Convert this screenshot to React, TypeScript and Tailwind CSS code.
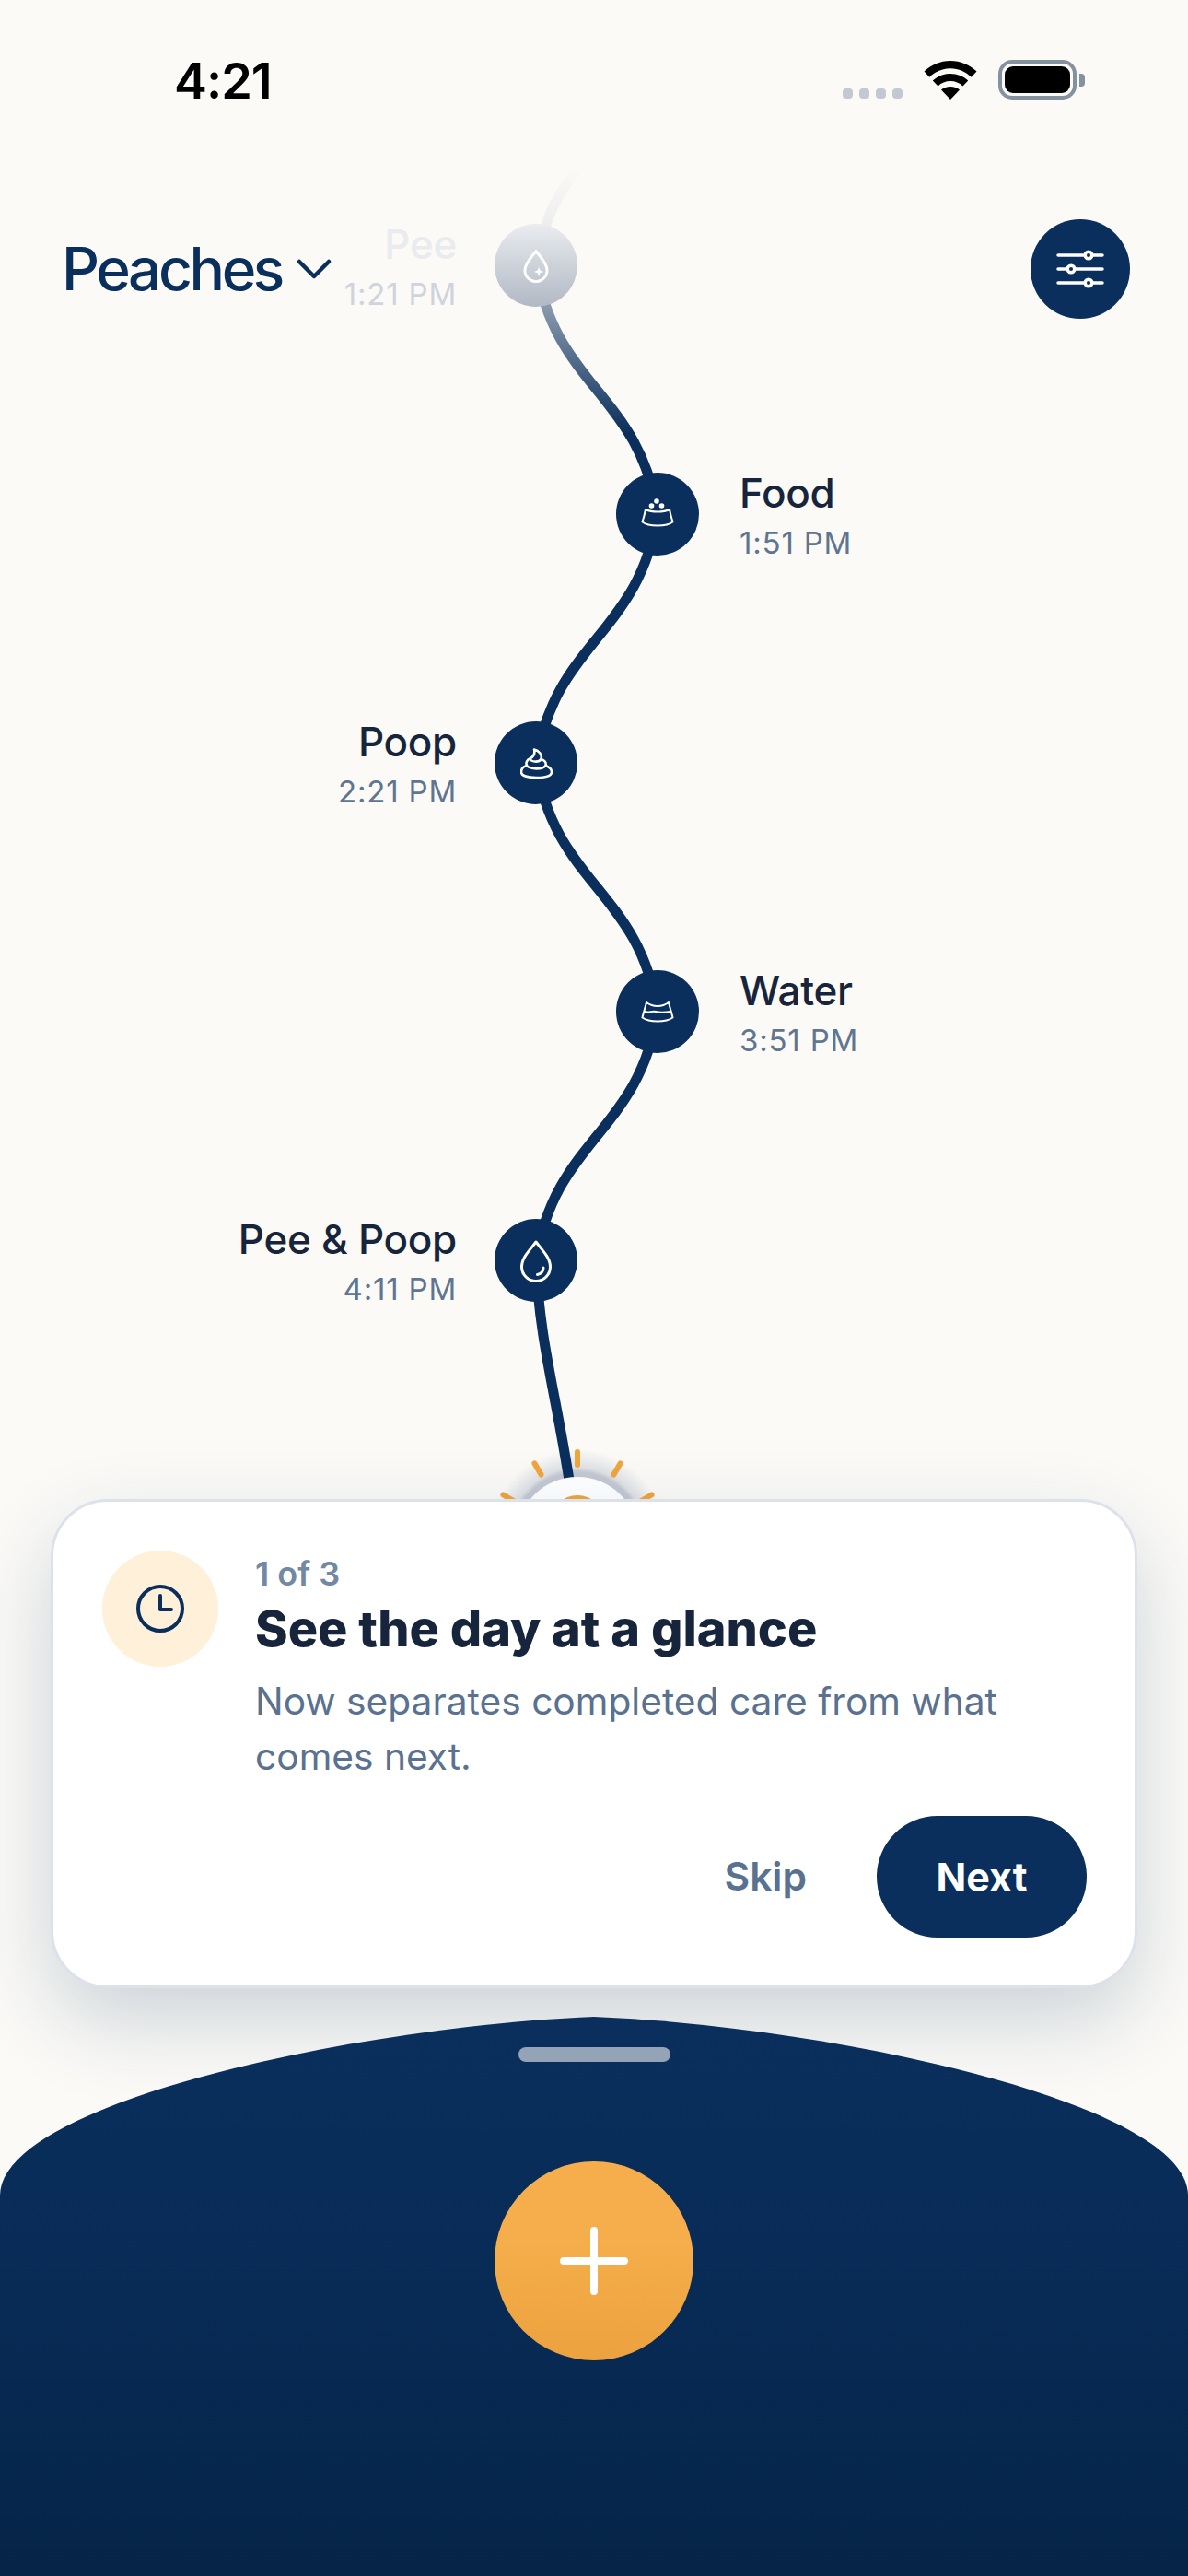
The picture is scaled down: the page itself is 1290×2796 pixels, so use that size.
import React from 'react';

const navy = '#0a2f5c';

function DropIcon({ sparkle = false }: { sparkle?: boolean }) {
  return (
    <svg width={sparkle ? 28 : 36} height={sparkle ? 37 : 47} viewBox="0 0 36 47" fill="none" stroke="#fff" strokeWidth={sparkle ? 3.8 : 3} strokeLinecap="round" strokeLinejoin="round">
      <path d="M18 3C12 11 2.500 20 2.500 30a15.500 15.500 0 0 0 31 0C33.500 20 24 11 18 3Z" />
      {sparkle ? (
        <path d="M22 25l1.800 5 5 1.800-5 1.800-1.800 5-1.800-5-5-1.800 5-1.800Z" fill="#fff" stroke="none" />
      ) : (
        <path d="M26 31c0 4-2 6.500-6.500 7.500" />
      )}
    </svg>
  );
}

function FoodBowlIcon() {
  return (
    <svg className="mb-[3px]" width="36" height="31" viewBox="0 0 36 31" fill="none" stroke="#fff" strokeWidth="2" strokeLinecap="round" strokeLinejoin="round">
      <path d="M5 12C4 17 3 21 1.500 25.500c3 2.500 10 4 16.500 4s13.500-1.500 16.500-4C33 21 32 17 31 12c-3 1.500-8 2.500-13 2.500S8 13.500 5 12Z" />
      <circle cx="11.500" cy="8" r="2.800" fill="#fff" stroke="none" />
      <circle cx="17" cy="3" r="2.800" fill="#fff" stroke="none" />
      <circle cx="22.500" cy="8" r="2.800" fill="#fff" stroke="none" />
    </svg>
  );
}

function WaterBowlIcon() {
  return (
    <svg width="36" height="24" viewBox="0 0 36 24" fill="none" stroke="#fff" strokeWidth="2" strokeLinecap="round" strokeLinejoin="round">
      <path d="M6 2C4.500 8 2.500 14 1.500 18.500 5 21 11 22.500 18 22.500S31 21 34.500 18.500C33.500 14 31.500 8 30 2 26 5 22 6 18 6S10 5 6 2Z" />
      <path d="M4 12c4 1.500 8-1 12 0s10 1 16 0" />
    </svg>
  );
}

function PoopIcon() {
  return (
    <svg width="35" height="33" viewBox="0 0 35 33" fill="none" stroke="#fff" strokeWidth="2.600" strokeLinecap="round" strokeLinejoin="round">
      <path d="M15 1.500C20 2.500 24 7 22.500 12 26 13 28.500 15.500 27.500 19 31.500 20.500 34 23 34 26c0 4-7 6-16.500 6S1 30 1 26c0-3 2-6 6-7-1.500-3.500.5-6.500 3.500-7.500C13 10 16.500 7 15 1.500Z" />
      <path d="M10.500 11.500c1 3.500 9.500 4.500 12 .5" />
      <path d="M7 19c4 4.500 17 4.500 20.500 0" />
    </svg>
  );
}

function SlidersIcon() {
  return (
    <svg width="52" height="44" viewBox="0 0 52 44" fill="none">
      {[7, 22, 37].map((y) => (
        <line key={y} x1="2" x2="50" y1={y} y2={y} stroke="#fff" strokeWidth="3.500" strokeLinecap="round" />
      ))}
      <circle cx="35" cy="7" r="3.800" fill={navy} stroke="#fff" strokeWidth="3.500" />
      <circle cx="16" cy="22" r="3.800" fill={navy} stroke="#fff" strokeWidth="3.500" />
      <circle cx="35" cy="37" r="3.800" fill={navy} stroke="#fff" strokeWidth="3.500" />
    </svg>
  );
}

function StatusIcons() {
  return (
    <div className="flex items-end">
      <div className="flex gap-[7px] mb-[1px]">
        <span className="w-[11px] h-[11px] rounded-[4px] bg-[#c3c8d2]" />
        <span className="w-[11px] h-[11px] rounded-[4px] bg-[#c3c8d2]" />
        <span className="w-[11px] h-[11px] rounded-[4px] bg-[#c3c8d2]" />
        <span className="w-[11px] h-[11px] rounded-[4px] bg-[#c3c8d2]" />
      </div>
      <svg className="ml-[23px]" width="58" height="42" viewBox="0 0 58 42" fill="#000">
        <path d="M29 42 19 31.500c2.700-2.300 6-3.500 10-3.500s7.300 1.200 10 3.500Z" />
        <path d="M15.500 27.500 9.800 21.500C15 16.800 21.500 14 29 14s14 2.800 19.200 7.500l-5.700 6C38.800 24 34.300 22.100 29 22.100S19.200 24 15.500 27.500Z" />
        <path d="M6.300 17.700.5 11.500C8 4.500 18 0 29 0s21 4.500 28.500 11.500l-5.800 6.200C45.700 12 37.800 8.200 29 8.200S12.300 12 6.300 17.700Z" />
      </svg>
      <div className="ml-[23px] flex items-center">
        <div className="w-[85px] h-[43px] rounded-[15px] border-[4px] border-[#84929f] p-[3px]">
          <div className="w-full h-full rounded-[9px] bg-black" />
        </div>
        <div className="ml-[3px] w-[6px] h-[14px] rounded-r-[4px] bg-[#84929f]" />
      </div>
    </div>
  );
}

const nodes = [
  { title: 'Pee', time: '1:21 PM', pos: 'left-[537px] top-[243px]', side: 'left', faded: true, icon: <DropIcon sparkle /> },
  { title: 'Food', time: '1:51 PM', pos: 'left-[669px] top-[513px]', side: 'right', faded: false, icon: <FoodBowlIcon /> },
  { title: 'Poop', time: '2:21 PM', pos: 'left-[537px] top-[783px]', side: 'left', faded: false, icon: <PoopIcon /> },
  { title: 'Water', time: '3:51 PM', pos: 'left-[669px] top-[1053px]', side: 'right', faded: false, icon: <WaterBowlIcon /> },
  { title: 'Pee & Poop', time: '4:11 PM', pos: 'left-[537px] top-[1323px]', side: 'left', faded: false, icon: <DropIcon /> },
];

function TimelineNode({ title, time, pos, side, faded, icon }: (typeof nodes)[number]) {
  return (
    <div className={`absolute ${pos} w-[90px] h-[90px]`}>
      <div className={`w-full h-full rounded-full flex items-center justify-center ${faded ? 'bg-gradient-to-b from-[#eaecef] to-[#b1b9c5]' : 'bg-[#0a2f5c]'}`}>
        {icon}
      </div>
      <div className={`absolute top-[-8px] whitespace-nowrap ${side === 'left' ? 'right-[131px] text-right' : 'left-[134px] text-left'}`}>
        <div className={`text-[44px] leading-[60px] font-medium tracking-[-0.3px] ${faded ? 'text-[#e9ebee]' : 'text-[#16253b]'}`}>{title}</div>
        <div className={`text-[33px] leading-[38px] mt-[5px] tracking-[0.8px] ${faded ? 'text-[#cfd4dc]' : 'text-[#5f7590]'}`}>{time}</div>
      </div>
    </div>
  );
}

function Timeline() {
  const rays = [-60, -30, 0, 30, 60];
  return (
    <div className="absolute inset-x-0 top-0 h-[1700px]">
      <svg className="absolute left-0 top-0" width="1290" height="1700" viewBox="0 0 1290 1700" fill="none">
        <defs>
          <linearGradient id="fade" gradientUnits="userSpaceOnUse" x1="0" x2="0" y1="180" y2="470">
            <stop offset="0" stopColor={navy} stopOpacity="0" />
            <stop offset="0.22" stopColor={navy} stopOpacity="0.06" />
            <stop offset="0.53" stopColor={navy} stopOpacity="0.48" />
            <stop offset="1" stopColor={navy} stopOpacity="1" />
          </linearGradient>
          <radialGradient id="glow" gradientUnits="userSpaceOnUse" cx="627" cy="1669" r="96">
            <stop offset="0.74" stopColor="#c3c8d2" stopOpacity="1" />
            <stop offset="0.79" stopColor="#c3c8d2" stopOpacity="0.5" />
            <stop offset="1" stopColor="#c3c8d2" stopOpacity="0" />
          </radialGradient>
        </defs>
        <circle cx="627" cy="1669" r="96" fill="url(#glow)" />
        <path d="M640 170C605 205 590 240 582 288C602 420 694 426 714 558" stroke="url(#fade)" strokeWidth="11" />
        <path d="M714 558C694 690 602 696 582 828C602 960 694 966 714 1098C694 1230 602 1236 582 1368C586 1470 610 1530 627 1669" stroke={navy} strokeWidth="11" />
        {rays.map((a) => (
          <line key={a} x1="627" x2="627" y1="1576" y2="1590" stroke="#f0a53c" strokeWidth="6" strokeLinecap="round" transform={`rotate(${a} 627 1669)`} />
        ))}
        <circle cx="627" cy="1669" r="66" fill="#fff" />
        <circle cx="627" cy="1653" r="30" fill="#f0a53c" />
      </svg>
      {nodes.map((n) => (
        <TimelineNode key={n.title} {...n} />
      ))}
    </div>
  );
}

function TourCard() {
  return (
    <div className="absolute left-[55px] top-[1627px] w-[1180px] h-[531px] rounded-[62px] bg-white border-[3px] border-[#dde2ea] shadow-[0_36px_90px_rgba(10,47,92,0.19)] pl-[53px] pr-[52px] pt-[53px]">
      <div className="flex gap-[40px]">
        <div className="w-[126px] h-[126px] rounded-full bg-[#fff0d9] flex items-center justify-center shrink-0">
          <svg width="52" height="52" viewBox="0 0 52 52" fill="none" stroke={navy} strokeWidth="4" strokeLinecap="round" strokeLinejoin="round">
            <circle cx="26" cy="26" r="24" />
            <path d="M26 12v15h12" />
          </svg>
        </div>
        <div className="flex-1 pt-[3px]">
          <div className="text-[36px] leading-[44px] font-semibold text-[#7388a3]">1 of 3</div>
          <div className="text-[54px] leading-[60px] font-extrabold text-[#16253b] mt-[8px]">See the day at a glance</div>
          <div className="text-[40.700px] leading-[60px] text-[#5a718f] mt-[19px]">Now separates completed care from what comes next.</div>
        </div>
      </div>
      <div className="flex items-center justify-end mt-[34px]">
        <span className="text-[42.500px] font-semibold text-[#5a718f] mr-[76px]">Skip</span>
        <span className="w-[228px] h-[132px] rounded-full bg-[#0a2f5c] text-white text-[43px] font-bold flex items-center justify-center">Next</span>
      </div>
    </div>
  );
}

function BottomSheet() {
  return (
    <div className="mt-auto h-[607px] flex flex-col items-center bg-gradient-to-b from-[#0a2f5c] via-[#082b56] to-[#052447] [clip-path:path('M0_194C0_92_395_10_645_0C895_10_1290_92_1290_194L1290_607L0_607Z')]">
      <div className="w-[165px] h-[16px] rounded-full bg-[#94a3b5] mt-[33px]" />
      <div className="w-[216px] h-[216px] rounded-full bg-gradient-to-b from-[#f5ae4b] from-40% to-[#eca23e] flex items-center justify-center mt-[108px]">
        <svg width="74" height="74" viewBox="0 0 74 74" fill="none" stroke="#fff" strokeWidth="8" strokeLinecap="round">
          <path d="M37 4v66M4 37h66" />
        </svg>
      </div>
    </div>
  );
}

export default function App() {
  return (
    <div className="relative w-[1290px] h-[2796px] overflow-hidden bg-[#fbfaf7] flex flex-col font-['Inter',sans-serif]">
      <Timeline />
      <div className="relative flex justify-between items-end pl-[189px] pr-[112px] pt-[54px] h-[108px]">
        <div className="text-[54px] leading-[54px] font-semibold text-black tracking-[-1px] translate-y-[7px]">4:21</div>
        <StatusIcons />
      </div>
      <div className="relative flex justify-between items-center pl-[67px] pr-[63px] mt-[129px]">
        <div className="flex items-center gap-[16px]">
          <span className="text-[64px] leading-[110px] font-medium text-[#0a2f5c] tracking-[-3.400px]">Peaches</span>
          <svg width="38" height="22" viewBox="0 0 38 22" fill="none" stroke={navy} strokeWidth="4.500" strokeLinecap="round" strokeLinejoin="round">
            <path d="M3 3l16 16L35 3" />
          </svg>
        </div>
        <div className="w-[108px] h-[108px] rounded-full bg-[#0a2f5c] flex items-center justify-center">
          <SlidersIcon />
        </div>
      </div>
      <TourCard />
      <BottomSheet />
    </div>
  );
}
